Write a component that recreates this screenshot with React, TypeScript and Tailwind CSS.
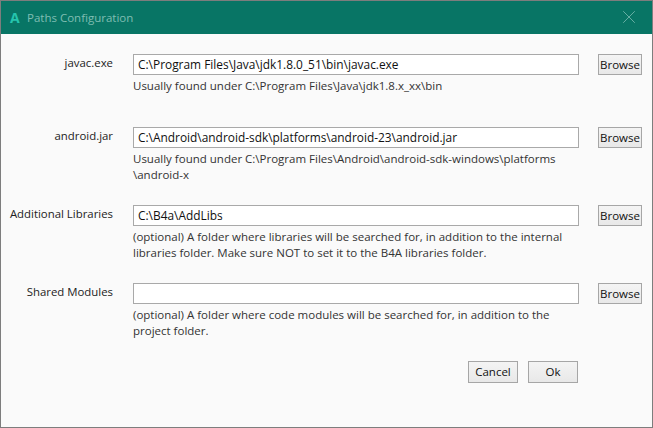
import React from 'react';
import { X } from 'lucide-react';

const rows = [
  {
    label: 'javac.exe',
    value: 'C:\\Program Files\\Java\\jdk1.8.0_51\\bin\\javac.exe',
    hint: ['Usually found under C:\\Program Files\\Java\\jdk1.8.x_xx\\bin'],
    height: 'h-[73px]',
  },
  {
    label: 'android.jar',
    value: 'C:\\Android\\android-sdk\\platforms\\android-23\\android.jar',
    hint: ['Usually found under C:\\Program Files\\Android\\android-sdk-windows\\platforms', '\\android-x'],
    height: 'h-[78px]',
  },
  {
    label: 'Additional Libraries',
    value: 'C:\\B4a\\AddLibs',
    hint: [
      '(optional) A folder where libraries will be searched for, in addition to the internal',
      'libraries folder. Make sure NOT to set it to the B4A libraries folder.',
    ],
    height: 'h-[78px]',
  },
  {
    label: 'Shared Modules',
    value: '',
    hint: ['(optional) A folder where code modules will be searched for, in addition to the', 'project folder.'],
    height: 'h-[78px]',
  },
];

const btn =
  'flex items-center justify-center border border-[#a6a6a6] bg-gradient-to-b from-[#f4f4f4] to-[#e8e8e8] text-[#111] text-[11.5px] leading-none';

export default function App() {
  return (
    <div className="w-[653px] h-[428px] flex flex-col border border-[#7d7d7d] bg-[#fafafa] overflow-hidden font-['Open_Sans','Noto_Sans',sans-serif]">
      <div className="h-[33px] shrink-0 flex items-center bg-[#087565] pl-[9px] pr-[12px]">
        <span className="text-[#25c4ad] text-[14px] font-bold w-[17px]">A</span>
        <span className="text-[#7fbdb2] text-[11.5px]">Paths Configuration</span>
        <X className="ml-auto mb-[2px] w-[22px] h-[22px] text-[#6fb3a8]" strokeWidth={1} />
      </div>

      <div className="flex flex-col pt-[20px]">
        {rows.map((row) => (
          <div key={row.label} className={`${row.height} flex items-start`}>
            <div className="w-[112px] shrink-0 text-right text-[11.4px] leading-[17px] text-[#222]">{row.label}</div>
            <div className="w-[446px] ml-[20px] shrink-0">
              <div className="h-[21px] border border-[#a9a9a9] bg-white pl-[4px] text-[11.9px] leading-[19px] text-[#111] whitespace-nowrap">
                {row.value}
              </div>
              <div className="mt-[3px] text-[11.5px] leading-[16px] text-[#333] whitespace-nowrap">
                {row.hint.map((line) => (
                  <div key={line}>{line}</div>
                ))}
              </div>
            </div>
            <button className={`${btn} ml-[19px] w-[44px] h-[21px]`}>Browse</button>
          </div>
        ))}
      </div>

      <div className="flex justify-end gap-[10px] mr-[74px]">
        <button className={`${btn} w-[50px] h-[22px]`}>Cancel</button>
        <button className={`${btn} w-[50px] h-[22px]`}>Ok</button>
      </div>
    </div>
  );
}
